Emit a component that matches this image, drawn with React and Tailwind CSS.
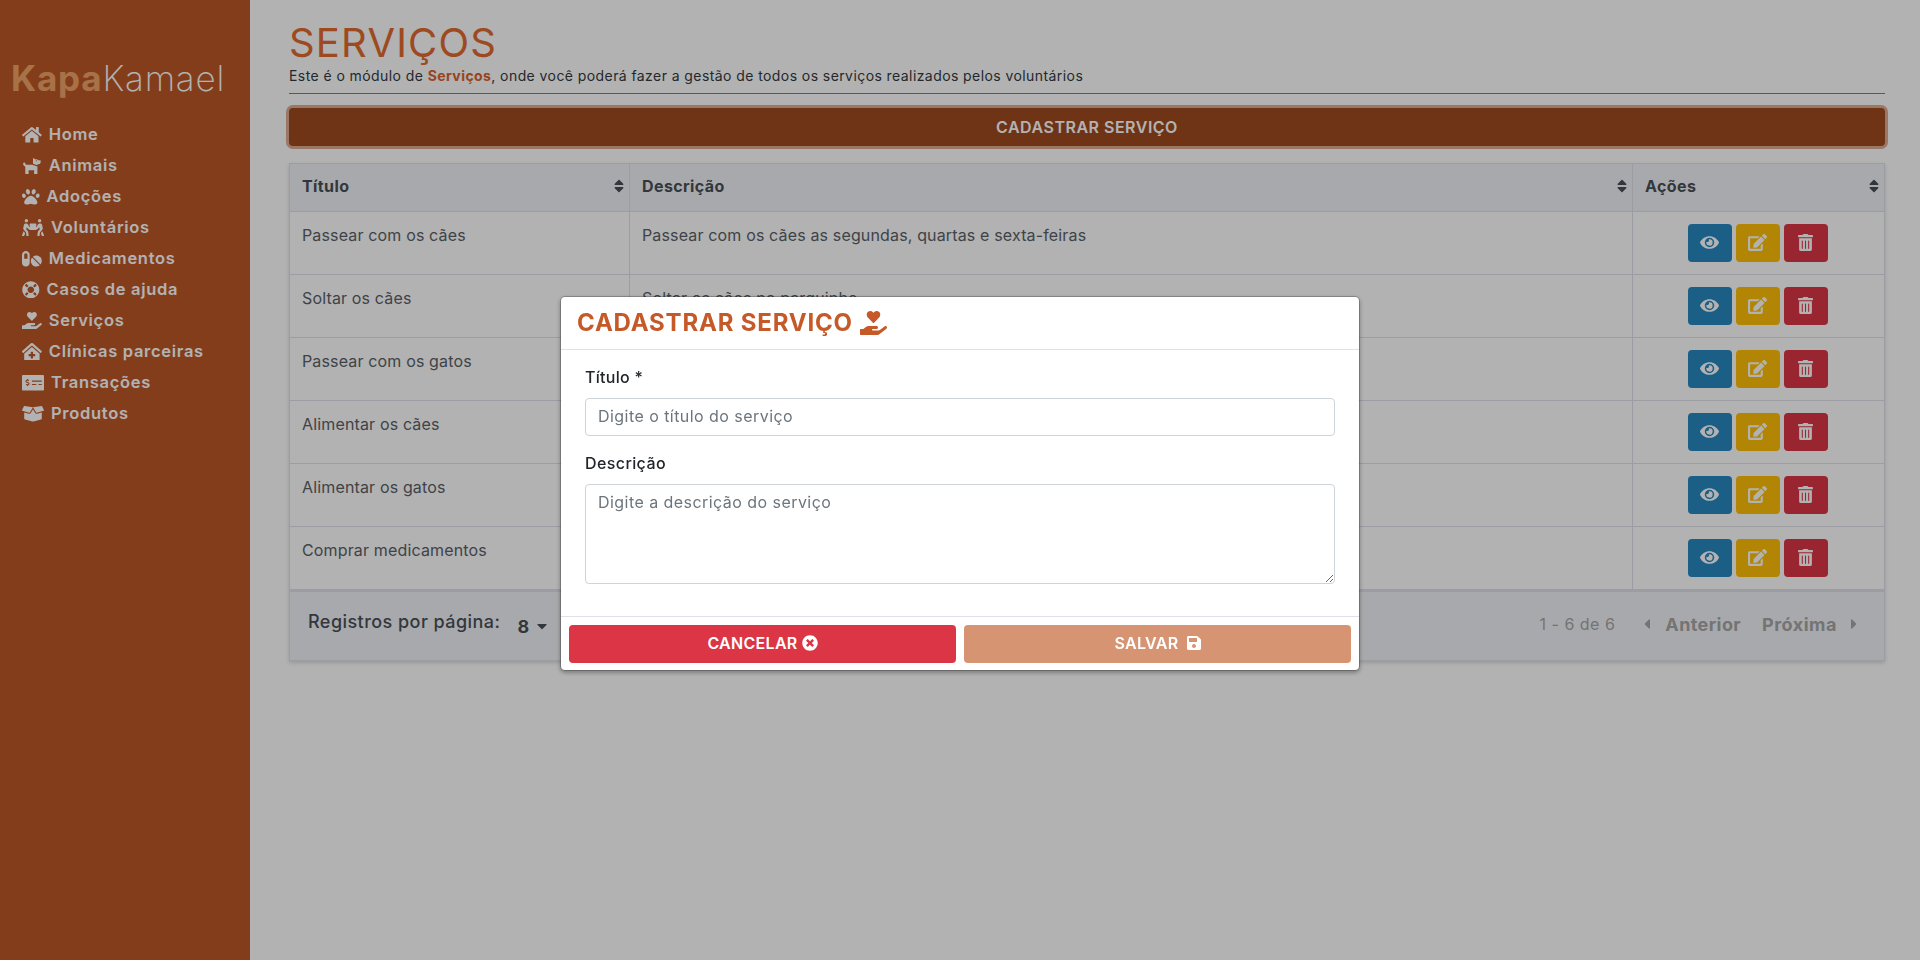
import {
  FaHome, FaDog, FaPaw, FaPeopleCarry, FaPills, FaLifeRing, FaHandHoldingHeart,
  FaClinicMedical, FaMoneyCheckAlt, FaBoxOpen, FaSort, FaEye, FaEdit, FaTrashAlt,
  FaTimesCircle, FaSave, FaCaretDown, FaCaretLeft, FaCaretRight,
} from "react-icons/fa";

const menu = [
  { label: "Home", icon: FaHome, width: "w-[19.8px]" },
  { label: "Animais", icon: FaDog, width: "w-[19.8px]" },
  { label: "Adoções", icon: FaPaw, width: "w-[17.6px]" },
  { label: "Voluntários", icon: FaPeopleCarry, width: "w-[22px]" },
  { label: "Medicamentos", icon: FaPills, width: "w-[19.8px]" },
  { label: "Casos de ajuda", icon: FaLifeRing, width: "w-[17.6px]" },
  { label: "Serviços", icon: FaHandHoldingHeart, width: "w-[19.8px]" },
  { label: "Clínicas parceiras", icon: FaClinicMedical, width: "w-[19.8px]" },
  { label: "Transações", icon: FaMoneyCheckAlt, width: "w-[22px]" },
  { label: "Produtos", icon: FaBoxOpen, width: "w-[22px]" },
];

const servicos = [
  { titulo: "Passear com os cães", descricao: "Passear com os cães as segundas, quartas e sexta-feiras" },
  { titulo: "Soltar os cães", descricao: "Soltar os cães no parquinho" },
  { titulo: "Passear com os gatos", descricao: "Passear com os gatos" },
  { titulo: "Alimentar os cães", descricao: "Alimentar os cães" },
  { titulo: "Alimentar os gatos", descricao: "Alimentar os gatos" },
  { titulo: "Comprar medicamentos", descricao: "Comprar medicamentos" },
];

function HeadCell({ children }) {
  return (
    <th className="border border-[#dfe1ea] p-0 text-left font-bold">
      <div className="flex h-[47px] items-center justify-between pb-[3px] pl-3 pr-[5px] tracking-[0.4px]">
        {children}
        <FaSort className="h-4 w-[10px]" />
      </div>
    </th>
  );
}

function ActionButton({ color, icon: Icon, width }) {
  return (
    <button className={`flex h-[38px] w-11 items-center justify-center rounded pb-[2px] text-white ${color}`}>
      <Icon className={`h-[17px] ${width}`} />
    </button>
  );
}

export default function App() {
  return (
    <div className="flex min-h-screen bg-white font-[Inter,sans-serif] text-[#212529]">
      {/* menu lateral */}
      <aside className="w-[250px] shrink-0 bg-[#be5827] pl-[11px] pt-[55px] text-white">
        <div className="h-[54px] text-[35px] leading-[46px] tracking-[0.8px]">
          <span className="font-bold text-[#f0a468]">Kapa</span>
          <span className="font-extralight">Kamael</span>
        </div>
        <nav className="pl-[11px] pt-[10px]">
          {menu.map(({ label, icon: Icon, width }) => (
            <a key={label} className="flex h-[31px] items-center gap-[7px] text-[16.5px] font-semibold tracking-[0.7px]">
              <Icon className={`h-[17.6px] ${width}`} />
              {label}
            </a>
          ))}
        </nav>
      </aside>

      <main className="min-w-0 flex-1 pl-[39px] pr-[35px]">
        <div className="border-b border-[#d9632c] pb-[8px] pt-[18px]">
          <h1 className="text-[40px] font-normal leading-[49px] tracking-[1.2px] text-[#e26a30]">SERVIÇOS</h1>
          <p className="text-[14px] leading-[18px] tracking-[0.42px] text-[#343a40]">
            Este é o módulo de <b className="text-[#d9632c]">Serviços</b>, onde você poderá fazer a gestão de todos os serviços realizados pelos voluntários
          </p>
        </div>

        <button className="mt-[14px] h-[38px] w-full rounded bg-[#9f491f] text-[16px] font-semibold tracking-[0.5px] text-white shadow-[0_0_0_3px_rgba(190,88,39,0.5)]">
          CADASTRAR SERVIÇO
        </button>

        <div className="mt-[17px] shadow-[0_2px_4px_rgba(0,0,0,0.15)]">
          <table className="w-full table-fixed border-collapse text-[16px] text-[#5a6168]">
            <colgroup>
              <col className="w-[340px]" />
              <col />
              <col className="w-[252px]" />
            </colgroup>
            <thead className="bg-[#f1f3f6] text-[#495057]">
              <tr>
                <HeadCell>Título</HeadCell>
                <HeadCell>Descrição</HeadCell>
                <HeadCell>Ações</HeadCell>
              </tr>
            </thead>
            <tbody>
              {servicos.map((s) => (
                <tr key={s.titulo} className="h-[63px]">
                  <td className="border border-[#dfe1ea] px-3 pt-[11px] align-top tracking-[0.15px]">{s.titulo}</td>
                  <td className="border border-[#dfe1ea] px-3 pt-[11px] align-top tracking-[0.15px]">{s.descricao}</td>
                  <td className="border border-[#dfe1ea] align-middle">
                    <div className="mr-[2px] flex justify-center gap-1">
                      <ActionButton color="bg-[#2788c1]" icon={FaEye} width="w-[19px]" />
                      <ActionButton color="bg-[#ffc107]" icon={FaEdit} width="w-[19px]" />
                      <ActionButton color="bg-[#dc3545]" icon={FaTrashAlt} width="w-[15px]" />
                    </div>
                  </td>
                </tr>
              ))}
            </tbody>
          </table>

          <div className="flex h-[71px] items-center justify-between border-x border-b border-t-2 border-[#dfe1ea] bg-[#f1f3f6] pl-[18px] pr-[27px] text-[#495057]">
            <div className="flex items-center">
              <span className="mb-[10px] text-[18px] font-medium tracking-[0.45px]">Registros por página:</span>
              <span className="ml-[17px] text-[18px] font-bold">8</span>
              <FaCaretDown className="ml-2 h-4 w-[10px]" />
            </div>
            <div className="flex items-center pb-1 text-[#a6a6a6]">
              <span className="text-[16px] tracking-[0.5px]">1 - 6 de 6</span>
              <FaCaretLeft className="ml-[29px] h-4 w-[6px]" />
              <span className="ml-[15px] text-[18px] font-bold tracking-[0.4px]">Anterior</span>
              <span className="ml-[21px] text-[18px] font-bold tracking-[0.5px]">Próxima</span>
              <FaCaretRight className="ml-[14px] h-4 w-[6px]" />
            </div>
          </div>
        </div>
      </main>

      {/* fundo escuro + modal */}
      <div className="fixed inset-0 flex justify-center bg-black/30 pt-[296px]">
        <div className="h-[375px] w-[800px] rounded-[5px] border border-black/20 bg-white bg-clip-padding shadow-[0_2px_4px_rgba(0,0,0,0.3)]">
          <div className="flex h-[53px] items-center gap-[7px] border-b border-[#dee2e6] pl-[16px] text-[24px] font-bold tracking-[0.8px] text-[#c55a28]">
            CADASTRAR SERVIÇO
            <FaHandHoldingHeart className="h-6 w-[27px]" />
          </div>

          <div className="h-[266px] px-6 pt-[15px]">
            <label className="block text-[16px] font-medium leading-[24px] tracking-[0.3px]">Título *</label>
            <input
              placeholder="Digite o título do serviço"
              className="mt-[9px] block h-[38px] w-full rounded border border-[#ced4da] px-3 pb-[2px] text-[16px] tracking-[0.45px] outline-none placeholder:text-[#6c757d]"
            />
            <label className="mt-[15px] block text-[16px] font-medium leading-[24px] tracking-[0.4px]">Descrição</label>
            <textarea
              placeholder="Digite a descrição do serviço"
              className="mt-[9px] block h-[100px] w-full rounded border border-[#ced4da] px-3 py-[5px] text-[16px] tracking-[0.45px] outline-none placeholder:text-[#6c757d]"
            />
          </div>

          <div className="flex gap-2 border-t border-[#dee2e6] px-2 pt-2">
            <button className="flex h-[38px] flex-1 items-center justify-center gap-1 rounded bg-[#dc3545] pb-[3px] text-[16px] font-semibold tracking-[0.3px] text-white">
              CANCELAR <FaTimesCircle />
            </button>
            <button className="flex h-[38px] flex-1 items-center justify-center gap-2 rounded bg-[#c05a28]/65 pb-[3px] text-[16px] font-semibold tracking-[0.3px] text-white">
              SALVAR <FaSave className="h-4 w-[14px]" />
            </button>
          </div>
        </div>
      </div>
    </div>
  );
}
